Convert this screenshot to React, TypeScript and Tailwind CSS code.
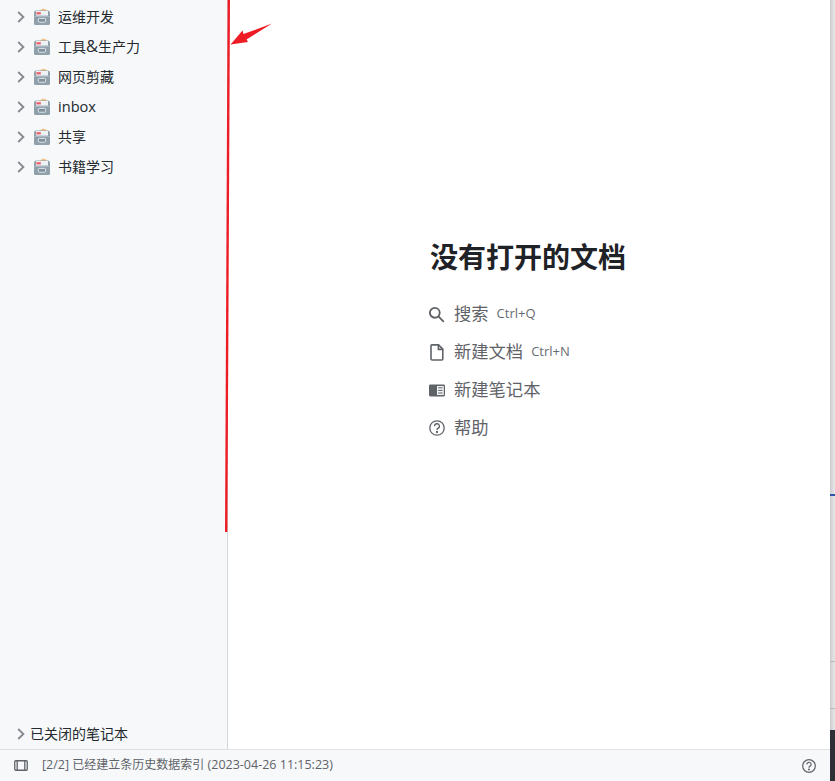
const NOTEBOOKS = ["运维开发", "工具&生产力", "网页剪藏", "inbox", "共享", "书籍学习"];

function Chevron() {
  return (
    <svg width="8" height="12" viewBox="0 0 8 12" fill="none" stroke="#85898e" strokeWidth="1.8" className="mt-px shrink-0">
      <path d="M1.2 1 L6.4 6 L1.2 11" />
    </svg>
  );
}

function BoxIcon() {
  return (
    <svg width="18" height="18" viewBox="0 0 18 18" className="mt-px shrink-0">
      <path d="M6 3 L10 0.6 L13.4 1.4 L13.4 4 L6 4 Z" fill="#f2c48a" />
      <path d="M1 5 Q1 2.6 3.4 2.6 L14.6 2.6 Q17 2.6 17 5 L17 15.4 Q17 17 15.4 17 L2.6 17 Q1 17 1 15.4 Z" fill="#90a0ab" />
      <rect x="3" y="3" width="12" height="4.6" fill="#eef2f5" />
      <rect x="3.4" y="4.2" width="4.4" height="2.2" fill="#ee5a67" />
      <rect x="1" y="8" width="16" height="1" fill="#a9b6bf" />
      <rect x="5.4" y="10.4" width="7.2" height="3.8" rx="0.8" fill="#7f8e99" stroke="#dfe5e9" strokeWidth="1" />
    </svg>
  );
}

function NotebookName({ name }: { name: string }) {
  if (name === "inbox") return <span className="mt-[2px] ml-[7px] text-[14.6px] text-[#24292e]">{name}</span>;
  const [before, after] = name.split("&");
  return (
    <span className="ml-[7px] text-[14px] text-[#24292e]">
      {before}
      {after && (
        <>
          <span className="text-[16.5px] leading-none">&amp;</span>
          {after}
        </>
      )}
    </span>
  );
}

function MenuRow({ icon, label, shortcut }: { icon: React.ReactNode; label: string; shortcut?: string }) {
  return (
    <div className="flex h-[38px] items-center text-[#5f6368]">
      <span className="flex w-[17px] shrink-0 justify-center">{icon}</span>
      <span className="ml-[9px] text-[17.3px]">{label}</span>
      {shortcut && <span className="ml-[8px] text-[13px] text-[#666b72]">{shortcut}</span>}
    </div>
  );
}

export default function App() {
  return (
    <div className="relative flex h-[781px] w-[835px] overflow-hidden bg-white font-['Open_Sans','Noto_Sans_CJK_SC',sans-serif]">
      <div className="flex w-[830px] flex-col">
        <div className="flex min-h-0 flex-1">
          {/* Notebook tree */}
          <aside className="flex w-[228px] shrink-0 flex-col justify-between border-r border-[#d4d6d9] bg-[#f6f8fa] pt-[1px] pb-[1px]">
            <div>
              {NOTEBOOKS.map((name) => (
                <div key={name} className="flex h-[30px] items-center pl-[17px]">
                  <Chevron />
                  <span className="ml-[8px] flex">
                    <BoxIcon />
                  </span>
                  <NotebookName name={name} />
                </div>
              ))}
            </div>
            <div className="flex h-[30px] items-center pl-[17px]">
              <Chevron />
              <span className="ml-[5px] text-[14px] text-[#24292e]">已关闭的笔记本</span>
            </div>
          </aside>

          {/* Empty state */}
          <main className="flex min-w-0 flex-1 flex-col pt-[237px] pl-[200px]">
            <h1 className="ml-[2px] text-[28px] leading-[40px] font-bold text-[#1f2226]">没有打开的文档</h1>
            <div className="mt-[18px] flex flex-col">
              <MenuRow
                label="搜索"
                shortcut="Ctrl+Q"
                icon={
                  <svg width="17" height="17" viewBox="0 0 17 17" fill="none" stroke="#5f6368" strokeWidth="1.9">
                    <circle cx="6.8" cy="6.8" r="4.9" />
                    <path d="M10.4 10.4 L15.8 15.8" />
                  </svg>
                }
              />
              <MenuRow
                label="新建文档"
                shortcut="Ctrl+N"
                icon={
                  <svg width="14" height="17" viewBox="0 0 14 17" fill="none" stroke="#5f6368" strokeWidth="1.6">
                    <path d="M1.8 0.9 H8.6 L12.8 5.2 V15 Q12.8 16 11.8 16 H2.2 Q1 16 1 15 V1.8 Q1 0.9 1.8 0.9 Z" />
                    <path d="M8.4 1 V5.4 H12.8" />
                  </svg>
                }
              />
              <MenuRow
                label="新建笔记本"
                icon={
                  <svg width="16" height="13" viewBox="0 0 16 13">
                    <rect x="0" y="0.5" width="16" height="12" rx="1.4" fill="#5f6368" />
                    <rect x="8" y="2" width="6.8" height="9" fill="#f2f3f4" />
                    <path d="M9.2 3.8 H13.6 M9.2 6.4 H13.6 M9.2 9 H13.6" stroke="#5f6368" strokeWidth="1" />
                  </svg>
                }
              />
              <MenuRow
                label="帮助"
                icon={
                  <svg width="16" height="16" viewBox="0 0 16 16" fill="none" stroke="#5f6368" strokeWidth="1.3">
                    <circle cx="8" cy="8" r="7.2" />
                    <path d="M5.6 6.2 A2.4 2.4 0 1 1 8.8 8.4 Q8 8.8 8 10" />
                    <circle cx="8" cy="12" r="0.5" fill="#5f6368" />
                  </svg>
                }
              />
            </div>
          </main>
        </div>

        {/* Status bar */}
        <footer className="flex h-[32px] shrink-0 items-center border-t border-[#dfe1e5] bg-[#f6f8fa] pr-[14px] pl-[14px] text-[#5f6368]">
          <svg width="14" height="11" viewBox="0 0 14 11" fill="none" stroke="#5f6368" className="shrink-0">
            <rect x="0.75" y="0.75" width="12.5" height="9.5" rx="1" strokeWidth="1.3" />
            <path d="M3.2 1 V10 M10.8 1 V10" strokeWidth="1.3" />
          </svg>
          <span className="ml-[14px] text-[12.5px]">
            [2/2] <span className="text-[12px]">已经建立条历史数据索引</span> (2023-04-26 11:15:23)
          </span>
          <svg width="14" height="14" viewBox="0 0 16 16" fill="none" stroke="#5f6368" strokeWidth="1.4" className="ml-auto">
            <circle cx="8" cy="8" r="7.2" />
            <path d="M5.6 6.2 A2.4 2.4 0 1 1 8.8 8.4 Q8 8.8 8 10" />
            <circle cx="8" cy="12" r="0.5" fill="#5f6368" />
          </svg>
        </footer>
      </div>

      {/* Sliver of the window behind */}
      <div className="flex w-[5px] shrink-0 flex-col bg-[linear-gradient(90deg,#c9cbcd,#e9e9ea)]">
        <div className="h-[494px]" />
        <div className="h-[2px] bg-[#2f55a8]" />
        <div className="h-[165px]" />
        <div className="h-px bg-[#b9babc]" />
        <div className="h-[46px]" />
        <div className="h-px bg-[#b9babc]" />
        <div className="h-[21px]" />
        <div className="flex-1 bg-[#2c2f33]" />
      </div>

      {/* Red annotation */}
      <svg width="835" height="781" viewBox="0 0 835 781" className="pointer-events-none absolute top-0 left-0">
        <path d="M228.8 0 L226.2 532" stroke="#ee1c25" strokeWidth="2.4" fill="none" />
        <path d="M230.5 44.5 L242.5 30.5 L243.5 34 L272 23.5 L246.5 39.5 L248 42 Z" fill="#ee1c25" />
      </svg>
    </div>
  );
}
